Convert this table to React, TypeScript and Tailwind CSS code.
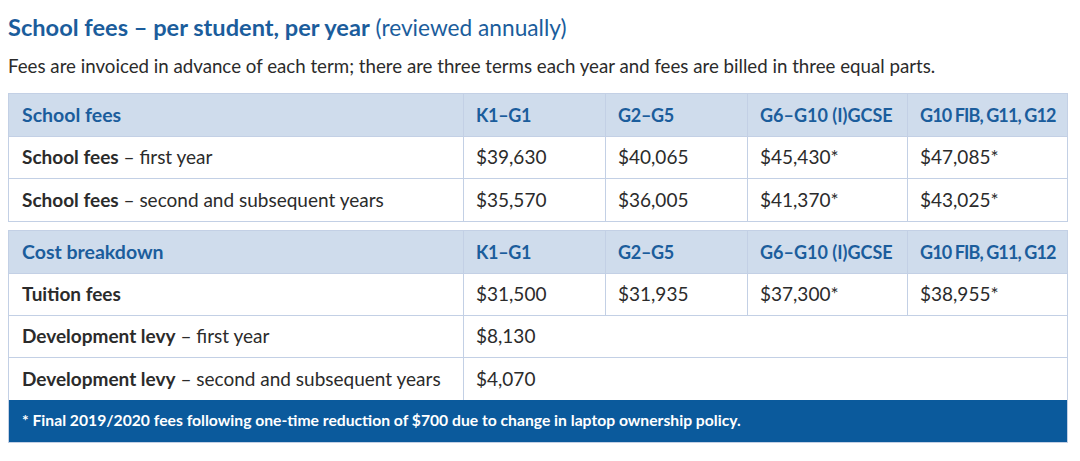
const font = { fontFamily: "Lato, 'Open Sans', sans-serif" };

const cols = "grid grid-cols-[455px_142px_142px_160px_161px]";
const grades = ["K1–G1", "G2–G5", "G6–G10 (I)GCSE", "G10 FIB, G11, G12"];

function HeaderRow({ title }: { title: string }) {
  return (
    <div className={`${cols} h-[43px] bg-[#cfdcec] border-b border-[#c3d0e5] font-bold text-[#1b5d9c]`}>
      <div className="pl-[13px] flex items-center border-r border-[#c3d0e5] text-[19.5px]">{title}</div>
      {grades.map((g, i) => (
        <div
          key={g}
          className={`flex items-center pl-3 text-[18px] ${i < 3 ? "border-r border-[#c3d0e5]" : ""} ${i === 3 ? "tracking-[-0.9px]" : ""} ${i < 2 ? "tracking-[-0.3px]" : ""}`}
        >
          {g}
        </div>
      ))}
    </div>
  );
}

function Row({
  bold,
  rest,
  values,
  last,
}: {
  bold: string;
  rest?: string;
  values: string[];
  last?: boolean;
}) {
  return (
    <div className={`${cols} h-[42px] bg-white text-[19px] text-[#2b2b2b] ${last ? "" : "border-b border-[#c3d0e5]"}`}>
      <div className="pl-[13px] flex items-center border-r border-[#c3d0e5]">
        <span className="font-bold">{bold}</span>
        {rest && <span>&nbsp;– {rest}</span>}
      </div>
      {values.length === 1 ? (
        <div className="col-span-4 flex items-center pl-3">{values[0]}</div>
      ) : (
        values.map((v, i) => (
          <div key={i} className={`flex items-center pl-3 ${i < 3 ? "border-r border-[#c3d0e5]" : ""}`}>
            {v}
          </div>
        ))
      )}
    </div>
  );
}

export default function App() {
  return (
    <div className="w-[1080px] h-[461px] bg-white px-2 overflow-hidden" style={font}>
      <h1 className="pt-[10px] h-[44px] text-[22.7px] leading-[34px] text-[#1b5d9c]">
        <span className="font-bold text-[23.6px]">School fees – per student, per year</span> (reviewed annually)
      </h1>
      <p className="h-[49px] pt-[10px] text-[18.7px] leading-[24px] text-[#2b2b2b]">
        Fees are invoiced in advance of each term; there are three terms each year and fees are billed in three equal parts.
      </p>

      <div className="w-[1060px] border border-[#c3d0e5]">
        <HeaderRow title="School fees" />
        <Row bold="School fees" rest="first year" values={["$39,630", "$40,065", "$45,430*", "$47,085*"]} />
        <Row bold="School fees" rest="second and subsequent years" values={["$35,570", "$36,005", "$41,370*", "$43,025*"]} last />
      </div>

      <div className="mt-[8px] w-[1060px] border border-[#c3d0e5]">
        <HeaderRow title="Cost breakdown" />
        <Row bold="Tuition fees" values={["$31,500", "$31,935", "$37,300*", "$38,955*"]} />
        <Row bold="Development levy" rest="first year" values={["$8,130"]} />
        <Row bold="Development levy" rest="second and subsequent years" values={["$4,070"]} last />
        <div className="h-[42px] bg-[#0b5a9c] flex items-center pl-[13px] text-[15.7px] font-bold text-white">
          * Final 2019/2020 fees following one-time reduction of $700 due to change in laptop ownership policy.
        </div>
      </div>
    </div>
  );
}
